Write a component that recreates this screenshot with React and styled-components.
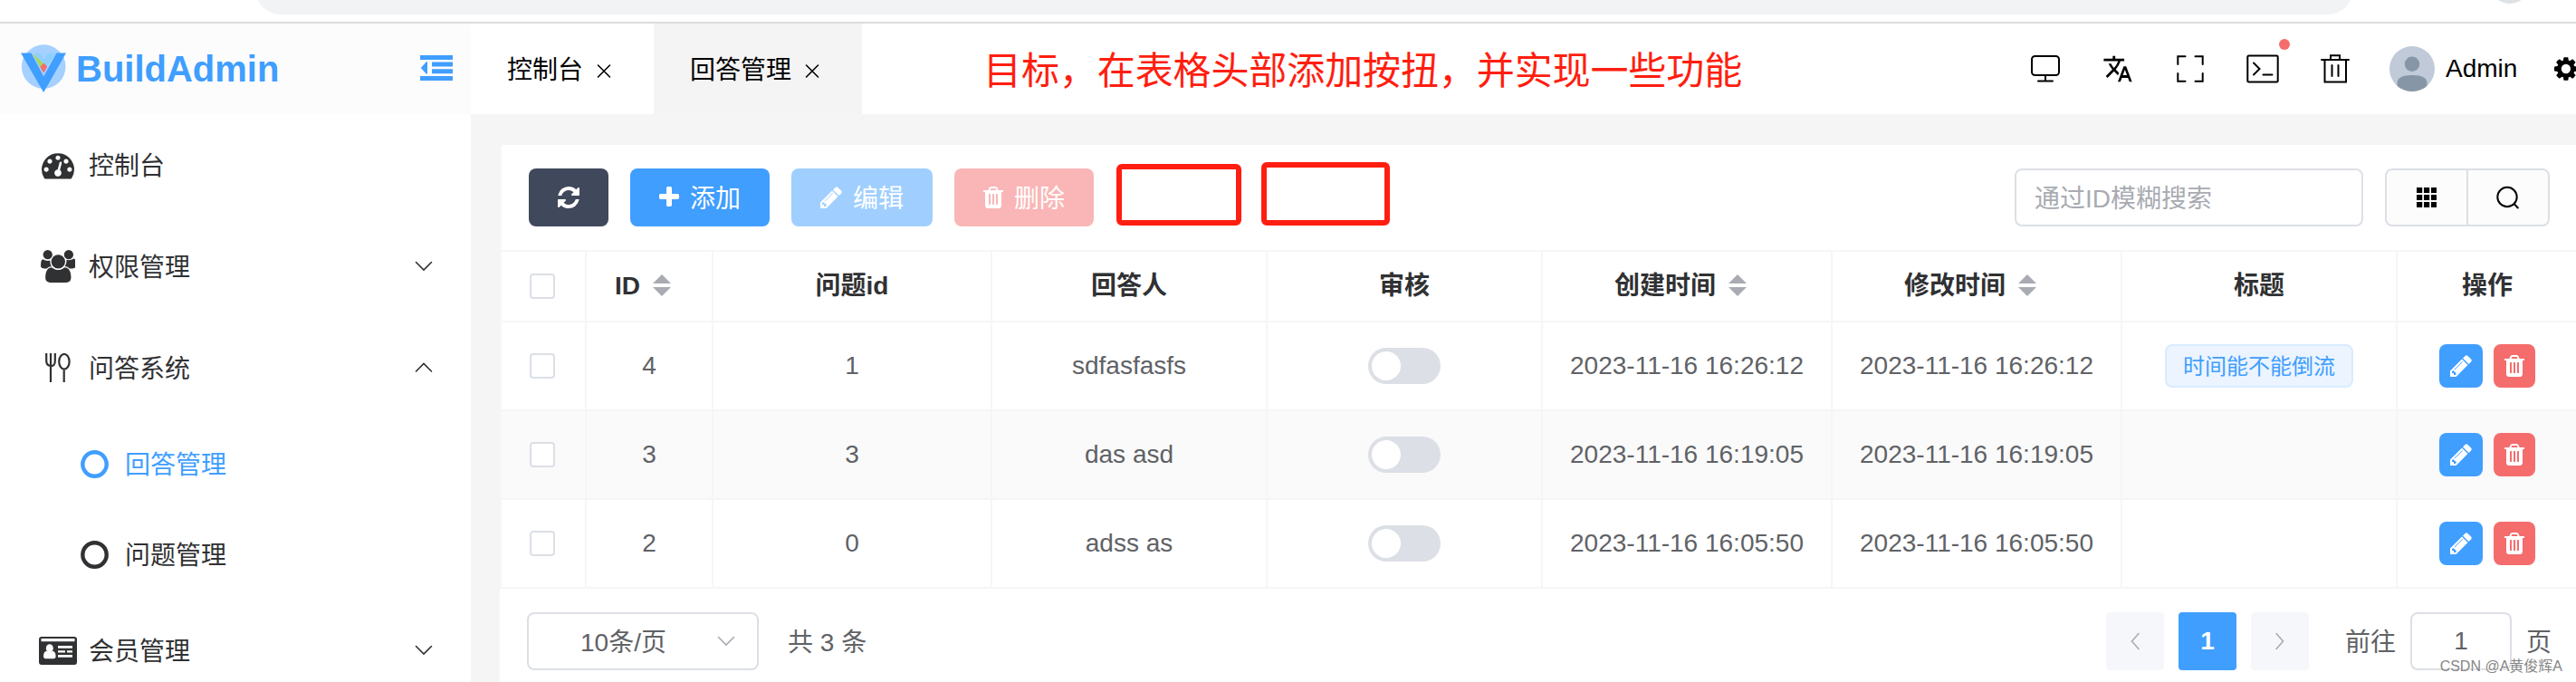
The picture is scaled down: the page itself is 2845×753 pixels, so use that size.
import React from "react";
import styled, { createGlobalStyle, css } from "styled-components";
import { MdTranslate } from "react-icons/md";

const GlobalStyle = createGlobalStyle`
  *, *::before, *::after { box-sizing: border-box; }
  body {
    margin: 0;
    background: #fff;
    font-family: "Liberation Sans", "Noto Sans CJK SC", sans-serif;
    font-size: 28px;
    color: #303133;
  }
  svg { display: block; flex: none; }
  button, input { font: inherit; }
`;

const c = {
  primary: "#409eff",
  danger: "#f56c6c",
  text: "#303133",
  regular: "#606266",
  muted: "#a8abb2",
  border: "#dcdfe6",
  line: "#f6f6f6",
  page: "#f5f5f5",
  mark: "#ff1e10",
};

/* ---------- icons ---------- */

const paths = {
  dashboard:
    "M384 1152q0-53-37.5-90.5t-90.5-37.5-90.5 37.5-37.5 90.5 37.5 90.5 90.5 37.5 90.5-37.5 37.5-90.5zm192-448q0-53-37.5-90.5t-90.5-37.5-90.5 37.5-37.5 90.5 37.5 90.5 90.5 37.5 90.5-37.5 37.5-90.5zm428 481l101-382q6-26-7.5-48.5t-38.5-29.5-48 6.5-30 39.5l-101 382q-60 5-107 43.5t-63 98.5q-20 77 20 146t117 89 146-20 89-117q16-60-6-117t-72-91zm660-33q0-53-37.5-90.5t-90.5-37.5-90.5 37.5-37.5 90.5 37.5 90.5 90.5 37.5 90.5-37.5 37.5-90.5zm-640-640q0-53-37.5-90.5t-90.5-37.5-90.5 37.5-37.5 90.5 37.5 90.5 90.5 37.5 90.5-37.5 37.5-90.5zm448 192q0-53-37.5-90.5t-90.5-37.5-90.5 37.5-37.5 90.5 37.5 90.5 90.5 37.5 90.5-37.5 37.5-90.5zm320 448q0 261-141 483-19 29-54 29h-1402q-35 0-54-29-141-221-141-483 0-182 71-348t191-286 286-191 348-71 348 71 286 191 191 286 71 348z",
  group:
    "M593 896q-162 5-265 128h-134q-82 0-138-40.5t-56-118.5q0-353 124-353 6 0 43.5 21t97.5 42.5 119 21.5q67 0 133-23-5 37-5 66 0 159 93 293zm1071 637q0 120-73 189.5t-194 69.5h-874q-121 0-194-69.5t-73-189.5q0-53 3.5-103.5t14-109 26.5-108.5 43-97.5 62-81 85.5-53.5 111.5-20q10 0 43 21.5t73 48 107 48 135 21.5 135-21.5 107-48 73-48 43-21.5q61 0 111.5 20t85.5 53.5 62 81 43 97.5 26.5 108.5 14 109 3.5 103.5zm-1024-1277q0 106-75 181t-181 75-181-75-75-181 75-181 181-75 181 75 75 181zm704 384q0 159-112.5 271.5t-271.5 112.5-271.5-112.5-112.5-271.5 112.5-271.5 271.5-112.5 271.5 112.5 112.5 271.5zm576 225q0 78-56 118.5t-138 40.5h-134q-103-123-265-128 93-134 93-293 0-29-5-66 66 23 133 23 59 0 119-21.5t97.5-42.5 43.5-21q124 0 124 353zm-128-609q0 106-75 181t-181 75-181-75-75-181 75-181 181-75 181 75 75 181z",
  refresh:
    "M1639 1056q0 5-1 7-64 268-268 434.5t-478 166.5q-146 0-282.5-55t-243.5-157l-129 129q-19 19-45 19t-45-19-19-45v-448q0-26 19-45t45-19h448q26 0 45 19t19 45-19 45l-137 137q71 66 161 102t187 36q134 0 250-65t186-179q11-17 53-117 8-23 30-23h192q13 0 22.5 9.5t9.5 22.5zm25-800v448q0 26-19 45t-45 19h-448q-26 0-45-19t-19-45 19-45l138-138q-148-137-349-137-134 0-250 65t-186 179q-11 17-53 117-8 23-30 23h-199q-13 0-22.5-9.5t-9.5-22.5v-7q65-268 270-434.5t480-166.5q146 0 284 55.5t245 156.5l130-129q19-19 45-19t45 19 19 45z",
  plus:
    "M1600 736v192q0 40-28 68t-68 28h-416v416q0 40-28 68t-68 28h-192q-40 0-68-28t-28-68v-416h-416q-40 0-68-28t-28-68v-192q0-40 28-68t68-28h416v-416q0-40 28-68t68-28h192q40 0 68 28t28 68v416h416q40 0 68 28t28 68z",
  pencil:
    "M491 1536l91-91-235-235-91 91v107h128v128h107zm523-928q0-22-22-22-10 0-17 7l-542 542q-7 7-7 17 0 22 22 22 10 0 17-7l542-542q7-7 7-17zm-54-192l416 416-832 832h-416v-416zm683 96q0 53-37 90l-166 166-416-416 166-165q36-38 90-38 53 0 91 38l235 234q37 39 37 91z",
  trash:
    "M704 1376v-704q0-14-9-23t-23-9h-64q-14 0-23 9t-9 23v704q0 14 9 23t23 9h64q14 0 23-9t9-23zm256 0v-704q0-14-9-23t-23-9h-64q-14 0-23 9t-9 23v704q0 14 9 23t23 9h64q14 0 23-9t9-23zm256 0v-704q0-14-9-23t-23-9h-64q-14 0-23 9t-9 23v704q0 14 9 23t23 9h64q14 0 23-9t9-23zm-544-992h448l-48-117q-7-9-17-11h-317q-10 2-17 11zm928 32v64q0 14-9 23t-23 9h-96v948q0 83-47 143.5t-113 60.5h-832q-66 0-113-58.5t-47-141.5v-952h-96q-14 0-23-9t-9-23v-64q0-14 9-23t23-9h309l70-167q15-37 54-63t79-26h320q40 0 79 26t54 63l70 167h309q14 0 23 9t9 23z",
  cogs:
    "M896 896q0-106-75-181t-181-75-181 75-75 181 75 181 181 75 181-75 75-181zm768 512q0-52-38-90t-90-38-90 38-38 90q0 53 37.5 90.5t90.5 37.5 90.5-37.5 37.5-90.5zm-384-603v185q0 10-7 19.5t-16 10.5l-155 24q-11 35-32 76 34 48 90 115 7 11 7 20 0 12-7 19-23 30-82.5 89.5t-78.5 59.5q-11 0-21-7l-115-90q-37 19-77 31-11 108-23 155-7 24-30 24h-186q-11 0-20-7.5t-10-17.5l-23-153q-34-10-75-31l-118 89q-7 7-20 7-11 0-21-8-144-133-144-160 0-9 7-19 10-14 41-53t47-61q-23-44-35-82l-152-24q-10-1-17-9.5t-7-19.5v-185q0-10 7-19.5t16-10.5l155-24q11-35 32-76-34-48-90-115-7-11-7-20 0-12 7-20 22-30 82-89t79-59q11 0 21 7l115 90q34-18 77-32 11-108 23-154 7-24 30-24h186q11 0 20 7.5t10 17.5l23 153q34 10 75 31l118-89q8-7 20-7 11 0 21 8 144 133 144 160 0 8-7 19-12 16-42 54t-45 60q23 48 34 82l152 23q10 2 17 10.5t7 19.5z",
};

const Glyph = ({ name, box = "128 0 1536 1792", w, h }) => (
  <svg width={w} height={h} viewBox={box} fill="currentColor">
    <path d={paths[name]} fillRule="nonzero" />
  </svg>
);

const RefreshIcon = () => <Glyph name="refresh" w={24} h={28} />;
const PlusIcon = () => <Glyph name="plus" box="192 0 1408 1792" w={22} h={28} />;
const PencilIcon = () => <Glyph name="pencil" w={24} h={28} />;
const TrashIcon = () => <Glyph name="trash" box="192 0 1408 1792" w={22} h={28} />;
const DashboardIcon = () => <Glyph name="dashboard" box="0 0 1792 1792" w={36} h={36} />;
const GroupIcon = () => <Glyph name="group" box="0 0 1920 1792" w={38.6} h={36} />;

const LogoIcon = () => (
  <svg width="50" height="54" viewBox="23 49 50 54">
    <circle cx="48.2" cy="73.6" r="24.3" fill="#a5d0ff" />
    <path d="M38 58.7h6l4.3 7 4.7-7h8.4L51.6 74l-3.4-4.3z" fill="#8ccfff" />
    <path d="M36 58.7 48.4 70.4 44.3 74.6z" fill="#a5d75c" />
    <path d="M48.3 69.4 52.2 73.6 48.3 80.4 44.2 74z" fill="#f56c6c" />
    <path d="M23 58.5h11.5L48.2 84.5 62.5 58.5H73L48.2 102z" fill={c.primary} />
  </svg>
);

const FoldIcon = () => (
  <svg width="36" height="28" viewBox="0 0 36 28" fill={c.primary}>
    <path d="M0 0h36v5H0zM13 7.5h23v5H13zM13 15.3h23v5H13zM0 23h36v5H0zM8 7.2v13.2H6.8L.8 14 6.8 7.2z" />
  </svg>
);

const ForkSpoonIcon = () => (
  <svg width="28" height="32" viewBox="0 0 28 32" fill="none" stroke="currentColor" strokeWidth="2.2">
    <path d="M1.200 0v8.500q0 5 4.800 5.500t4.800-5.500V0M6 0v32M20.700 18.500V32" />
    <ellipse cx="20.900" cy="9.300" rx="5.700" ry="8.300" />
  </svg>
);

const RingIcon = () => (
  <svg width="31" height="31" viewBox="0 0 31 31" fill="none" stroke="currentColor" strokeWidth="4.400">
    <circle cx="15.500" cy="15.500" r="13.200" />
  </svg>
);

const CardIcon = () => (
  <svg width="42" height="31" viewBox="0 0 42 31">
    <rect width="42" height="31" rx="3" fill="currentColor" />
    <path d="M2.500 2h37v3.200h-37zM21 10h16v2.700H21zM21 15.200h8v2.300h-8zM31 15.200h6v2.300h-6zM21 20h16v2.700H21z" fill="#fff" />
    <ellipse cx="11.800" cy="12.800" rx="4" ry="4.600" fill="#fff" />
    <path d="M5 21.500q0-5 3.800-5.700 3 2.600 6 0 3.800.7 3.800 5.700 0 2.700-2.500 2.700H7.500Q5 24.200 5 21.500z" fill="#fff" />
  </svg>
);

const Stroke = styled.svg`
  fill: none;
  stroke: currentColor;
  stroke-width: ${(p) => p.$w || 2};
  stroke-linecap: round;
`;

const arrows = {
  down: [20, 12, "M1.500 1.500 10 10 18.500 1.500"],
  up: [20, 12, "M1.500 10 10 1.500 18.500 10"],
  left: [12, 20, "M10 1.500 2.500 10l7.500 8.500"],
  right: [12, 20, "M2 1.500 9.500 10 2 18.500"],
};
const Chevron = ({ dir }) => {
  const [w, h, d] = arrows[dir];
  return (
    <Stroke width={w} height={h} viewBox={`0 0 ${w} ${h}`} $w={1.6}>
      <path d={d} />
    </Stroke>
  );
};

const CloseIcon = () => (
  <Stroke width="30" height="30" viewBox="0 0 30 30" $w={1.6}>
    <path d="M8.500 10l13 13M21.500 10l-13 13" />
  </Stroke>
);

const MonitorIcon = () => (
  <Stroke width="34" height="32" viewBox="0 0 34 32">
    <rect x="2" y="2" width="30" height="21" rx="3.500" />
    <path d="M17 23v6M9 29.500h16" />
  </Stroke>
);
const FullScreenIcon = () => (
  <Stroke width="30" height="30" viewBox="0 0 30 30">
    <path d="M9.500 1.300H1.300v8.700M20.500 1.300h8.200v8.700M9.500 28.700H1.300V20M20.500 28.700h8.200V20" />
  </Stroke>
);
const TerminalIcon = () => (
  <Stroke width="36" height="32" viewBox="0 0 36 32">
    <rect x="1.300" y="1.500" width="33.400" height="29" rx="1.500" />
    <path d="M8 9.500l6.500 6.500L8 22.500M18.500 22.500h10" />
  </Stroke>
);
const BinIcon = () => (
  <Stroke width="32" height="32" viewBox="0 0 32 32">
    <path d="M1 6h30M11 5.500V1.300h10v4.200M4.500 6v24.500h23.500V6M12.500 12v12M19.500 12v12" />
  </Stroke>
);
const Avatar = () => (
  <svg width="50" height="50" viewBox="0 0 50 50">
    <defs>
      <clipPath id="avatar-clip">
        <circle cx="25" cy="25" r="25" />
      </clipPath>
    </defs>
    <g clipPath="url(#avatar-clip)">
      <rect width="50" height="50" fill="#c0cad8" />
      <circle cx="25" cy="19.700" r="8.200" fill="#8796a6" />
      <path d="M8.500 50V41q0-9 16.500-9t16.500 9v9z" fill="#8796a6" />
    </g>
  </svg>
);
const GridIcon = () => (
  <svg width="22" height="22" viewBox="0 0 22 22" fill="#000">
    {[0, 8, 16].map((y) => [0, 8, 16].map((x) => <rect key={`${x}-${y}`} x={x} y={y} width="6.200" height="6" />))}
  </svg>
);
const SearchIcon = () => (
  <Stroke width="26" height="26" viewBox="0 0 26 26">
    <circle cx="12" cy="12.500" r="10.700" />
    <path d="M19.800 20.300 23.800 24.500" />
  </Stroke>
);

/* ---------- frame ---------- */

const Page = styled.div`
  position: relative;
  width: 2845px;
  height: 753px;
  overflow: hidden;
  display: flex;
  flex-direction: column;
  background: ${c.page};
`;

const BrowserBar = styled.div`
  flex: none;
  height: 26px;
  display: flex;
  align-items: flex-start;
  overflow: hidden;
  background: #fff;
  border-bottom: 2px solid #dcdcdc;
`;
const AddressPill = styled.div`
  width: 2317px;
  height: 56px;
  margin: -40px 0 0 282px;
  border-radius: 28px;
  background: #f1f3f4;
`;
const ProfileDot = styled.div`
  width: 44px;
  height: 44px;
  margin: -40px 0 0 151px;
  border-radius: 50%;
  background: #dee1e6;
`;

const Shell = styled.div`
  flex: 1;
  min-height: 0;
  display: flex;
`;

const Label = styled.span`
  padding-top: ${(p) => (p.$latin ? 0 : 3)}px;
  line-height: 40px;
  white-space: pre;
`;

/* ---------- sidebar ---------- */

const Sidebar = styled.aside`
  flex: none;
  width: 520px;
  background: #fff;
`;
const Brand = styled.div`
  height: 100px;
  padding: 0 20px 0 23px;
  display: flex;
  align-items: center;
  background: #fcfcfc;
  & > svg:last-child { margin: -2px 0 0 auto; }
`;
const BrandName = styled.span`
  margin-left: 11px;
  font-size: 40px;
  line-height: 50px;
  font-weight: 700;
  color: ${c.primary};
`;
const MenuItem = styled.div`
  height: ${(p) => (p.$sub ? 100 : 112)}px;
  padding: 0 42px 0 ${(p) => (p.$sub ? 80 : 40)}px;
  display: flex;
  align-items: center;
  color: ${(p) => (p.$active ? c.primary : c.text)};
  & > svg { margin-left: auto; }
`;
const MenuIcon = styled.span`
  width: 48px;
  margin-right: 10px;
  display: flex;
  justify-content: center;
`;

const menu = [
  { text: "控制台", icon: <DashboardIcon /> },
  { text: "权限管理", icon: <GroupIcon />, arrow: "down" },
  { text: "问答系统", icon: <ForkSpoonIcon />, arrow: "up" },
  { text: "回答管理", icon: <RingIcon />, sub: true, active: true },
  { text: "问题管理", icon: <RingIcon />, sub: true },
  { text: "会员管理", icon: <CardIcon />, arrow: "down" },
];

/* ---------- top bar ---------- */

const Main = styled.main`
  flex: 1;
  min-width: 0;
  display: flex;
  flex-direction: column;
`;
const TopBar = styled.header`
  flex: none;
  height: 100px;
  display: flex;
  align-items: center;
  background: #fff;
  color: #000;
`;
const Tab = styled.div`
  height: 100%;
  padding: 1px 40px 0;
  display: flex;
  align-items: center;
  gap: 8px;
  background: ${(p) => (p.$active ? "#f4f4f4" : "#fff")};
`;
const Note = styled.div`
  margin-left: 134px;
  padding-top: 5px;
  font-size: 42px;
  line-height: 60px;
  letter-spacing: -0.1px;
  white-space: nowrap;
  color: ${c.mark};
`;
const NavIcons = styled.div`
  flex: none;
  width: 645px;
  height: 100%;
  margin-left: auto;
  display: flex;
  align-items: center;
  overflow: hidden;
`;
const NavList = styled.div`
  display: flex;
  margin-left: 19px;
`;
const NavItem = styled.div`
  position: relative;
  flex: none;
  width: 80px;
  height: 60px;
  display: flex;
  align-items: center;
  justify-content: center;
`;
const AlertDot = styled.i`
  position: absolute;
  top: -3px;
  right: 10px;
  width: 12px;
  height: 12px;
  border-radius: 50%;
  background: ${c.danger};
`;
const User = styled.div`
  flex: none;
  display: flex;
  align-items: center;
  gap: 12px;
  margin: 0 41px 0 20px;
`;

/* ---------- card ---------- */

const Card = styled.section`
  flex: 1;
  width: 2296px;
  margin: 34px 0 0 32px;
  display: flex;
  flex-direction: column;
  background: #fff;
`;
const Toolbar = styled.div`
  height: 118px;
  padding: 0 32px 0 30px;
  display: flex;
  align-items: center;
  border-left: 2px solid ${c.line};
  border-bottom: 2px solid ${c.line};
`;
const tones = { dark: "#40485b", primary: c.primary, edit: "#a0cfff", remove: "#fab6b6" };
const ActionButton = styled.button`
  height: 64px;
  margin: 0 24px 0 0;
  padding: 0 32px;
  display: flex;
  align-items: center;
  gap: 12px;
  border: 0;
  border-radius: 8px;
  color: #fff;
  background: ${(p) => tones[p.$tone]};
`;
const MarkedSlot = styled.div`
  width: ${(p) => p.$w}px;
  height: ${(p) => p.$h}px;
  margin: ${(p) => p.$m};
  border: 6px solid ${c.mark};
  border-radius: 6px;
`;
const SearchInput = styled.input`
  width: 385px;
  height: 64px;
  margin-left: auto;
  padding: 3px 20px 0;
  border: 2px solid ${c.border};
  border-radius: 8px;
  outline: none;
  &::placeholder { color: ${c.muted}; opacity: 1; }
`;
const ToolGroup = styled.div`
  width: 182px;
  height: 64px;
  margin-left: 24px;
  display: flex;
  border: 2px solid ${c.border};
  border-radius: 8px;
  background: #fcfcfc;
  overflow: hidden;
`;
const ToolCell = styled.div`
  flex: 1;
  display: flex;
  align-items: center;
  justify-content: center;
  color: #000;
  & + & { border-left: 2px solid ${c.border}; }
`;

/* ---------- table ---------- */

const Row = styled.div`
  display: grid;
  grid-template-columns: 94px 140px 308px 304px 304px 320px 320px 304px 200px;
  height: ${(p) => (p.$head ? 78 : 98)}px;
  border-left: 2px solid ${c.line};
  border-bottom: 2px solid ${c.line};
  background: ${(p) => (p.$striped ? "#fafafa" : "#fff")};
  color: ${(p) => (p.$head ? c.text : c.regular)};
  font-weight: ${(p) => (p.$head ? 700 : 400)};
  ${(p) => p.$head && css`padding-bottom: 0;`}
`;
const Cell = styled.div`
  display: flex;
  align-items: center;
  justify-content: center;
  border-right: 2px solid ${c.line};
  line-height: 40px;
  &:first-child { padding-right: 2px; }
  &:last-child { border-right-color: transparent; }
`;
const Checkbox = styled.span`
  width: 28px;
  height: 28px;
  border: 2px solid ${c.border};
  border-radius: 4px;
  background: #fff;
`;
const Sorter = styled.span`
  width: 48px;
  height: 24px;
  margin-top: -2px;
  display: flex;
  flex-direction: column;
  align-items: center;
  justify-content: space-between;
`;
const Triangle = styled.i`
  border: 10px solid transparent;
  ${(p) =>
    p.$up
      ? css`border-top-width: 0; border-bottom-color: ${c.muted};`
      : css`border-bottom-width: 0; border-top-color: ${c.muted};`}
`;
const Switch = styled.span`
  width: 80px;
  height: 40px;
  padding: 4px;
  border-radius: 20px;
  background: ${c.border};
  &::before {
    content: "";
    display: block;
    width: 32px;
    height: 32px;
    border-radius: 50%;
    background: #fff;
  }
`;
const Tag = styled.span`
  height: 48px;
  padding: 0 18px;
  border: 2px solid #d9ecff;
  border-radius: 8px;
  background: #ebf4ff;
  color: ${c.primary};
  font-size: 24px;
  line-height: 45px;
`;
const RowButton = styled.button`
  height: 48px;
  padding: 0 12px;
  display: flex;
  align-items: center;
  border: 0;
  border-radius: 8px;
  color: #fff;
  background: ${(p) => (p.$danger ? c.danger : c.primary)};
  & + & { margin-left: 12px; }
`;

const Sort = () => (
  <Sorter>
    <Triangle $up />
    <Triangle />
  </Sorter>
);

const columns = [
  { text: "ID", sort: true },
  { text: "问题id" },
  { text: "回答人" },
  { text: "审核" },
  { text: "创建时间", sort: true },
  { text: "修改时间", sort: true },
  { text: "标题" },
  { text: "操作" },
];
const records = [
  { id: 4, question: 1, by: "sdfasfasfs", time: "2023-11-16 16:26:12", title: "时间能不能倒流" },
  { id: 3, question: 3, by: "das asd", time: "2023-11-16 16:19:05" },
  { id: 2, question: 0, by: "adss as", time: "2023-11-16 16:05:50" },
];

/* ---------- pagination ---------- */

const Pagination = styled.div`
  padding: 26px 30px 0;
  display: flex;
  align-items: center;
  color: ${c.regular};
`;
const PageSize = styled.div`
  width: 256px;
  height: 64px;
  padding: 0 24px 0 57px;
  display: flex;
  align-items: center;
  justify-content: space-between;
  border: 2px solid ${c.border};
  border-radius: 8px;
  margin-right: 32px;
  & > svg { color: ${c.muted}; }
`;
const PagerButton = styled.button`
  width: 64px;
  height: 64px;
  margin: 0 16px 0 0;
  padding: 0;
  display: flex;
  align-items: center;
  justify-content: center;
  border: 0;
  border-radius: 4px;
  line-height: 40px;
  font-weight: 700;
  color: ${(p) => (p.$active ? "#fff" : c.muted)};
  background: ${(p) => (p.$active ? c.primary : "#f5f7fa")};
`;
const Pager = styled.div`
  display: flex;
  margin: 0 24px 0 auto;
`;
const Jump = styled.div`
  width: 112px;
  height: 64px;
  margin: 0 16px;
  display: flex;
  align-items: center;
  justify-content: center;
  border: 2px solid ${c.border};
  border-radius: 8px;
`;
const Jumper = styled.div`
  display: flex;
  align-items: center;
`;
const Watermark = styled.div`
  position: absolute;
  right: 15px;
  bottom: 5px;
  font-size: 16px;
  line-height: 24px;
  color: #858585;
  text-shadow: 1px 1px 0 #fff;
`;

export default function App() {
  return (
    <Page>
      <GlobalStyle />
      <BrowserBar>
        <AddressPill />
        <ProfileDot />
      </BrowserBar>
      <Shell>
        <Sidebar>
          <Brand>
            <LogoIcon />
            <BrandName>BuildAdmin</BrandName>
            <FoldIcon />
          </Brand>
          {menu.map((m) => (
            <MenuItem key={m.text} $sub={m.sub} $active={m.active}>
              <MenuIcon>{m.icon}</MenuIcon>
              <Label>{m.text}</Label>
              {m.arrow && <Chevron dir={m.arrow} />}
            </MenuItem>
          ))}
        </Sidebar>
        <Main>
          <TopBar>
            <Tab>
              <Label>控制台</Label>
              <CloseIcon />
            </Tab>
            <Tab $active>
              <Label>回答管理</Label>
              <CloseIcon />
            </Tab>
            <Note>目标，在表格头部添加按扭，并实现一些功能</Note>
            <NavIcons>
              <NavList>
                <NavItem><MonitorIcon /></NavItem>
                <NavItem><MdTranslate size={34} /></NavItem>
                <NavItem><FullScreenIcon /></NavItem>
                <NavItem>
                  <TerminalIcon />
                  <AlertDot />
                </NavItem>
                <NavItem><BinIcon /></NavItem>
              </NavList>
              <User>
                <Avatar />
                <Label $latin>Admin</Label>
              </User>
              <Glyph name="cogs" box="0 0 1920 1792" w={38.6} h={36} />
            </NavIcons>
          </TopBar>
          <Card>
            <Toolbar>
              <ActionButton $tone="dark"><RefreshIcon /></ActionButton>
              <ActionButton $tone="primary"><PlusIcon /><Label>添加</Label></ActionButton>
              <ActionButton $tone="edit"><PencilIcon /><Label>编辑</Label></ActionButton>
              <ActionButton $tone="remove"><TrashIcon /><Label>删除</Label></ActionButton>
              <MarkedSlot $w={138} $h={68} $m="-6px 0 0 1px" />
              <MarkedSlot $w={142} $h={70} $m="-8px 0 0 22px" />
              <SearchInput placeholder="通过ID模糊搜索" />
              <ToolGroup>
                <ToolCell><GridIcon /></ToolCell>
                <ToolCell><SearchIcon /></ToolCell>
              </ToolGroup>
            </Toolbar>
            <Row $head>
              <Cell><Checkbox /></Cell>
              {columns.map((col) => (
                <Cell key={col.text}>
                  {col.text}
                  {col.sort && <Sort />}
                </Cell>
              ))}
            </Row>
            {records.map((r, i) => (
              <Row key={r.id} $striped={i % 2 === 1}>
                <Cell><Checkbox /></Cell>
                <Cell>{r.id}</Cell>
                <Cell>{r.question}</Cell>
                <Cell>{r.by}</Cell>
                <Cell><Switch /></Cell>
                <Cell>{r.time}</Cell>
                <Cell>{r.time}</Cell>
                <Cell>{r.title && <Tag>{r.title}</Tag>}</Cell>
                <Cell>
                  <RowButton><PencilIcon /></RowButton>
                  <RowButton $danger><TrashIcon /></RowButton>
                </Cell>
              </Row>
            ))}
            <Pagination>
              <PageSize>
                <Label>10条/页</Label>
                <Chevron dir="down" />
              </PageSize>
              <Label>共 3 条</Label>
              <Pager>
                <PagerButton><Chevron dir="left" /></PagerButton>
                <PagerButton $active>1</PagerButton>
                <PagerButton><Chevron dir="right" /></PagerButton>
              </Pager>
              <Jumper>
                <Label>前往</Label>
                <Jump>1</Jump>
                <Label>页</Label>
              </Jumper>
            </Pagination>
          </Card>
        </Main>
      </Shell>
      <Watermark>CSDN @A黄俊辉A</Watermark>
    </Page>
  );
}
